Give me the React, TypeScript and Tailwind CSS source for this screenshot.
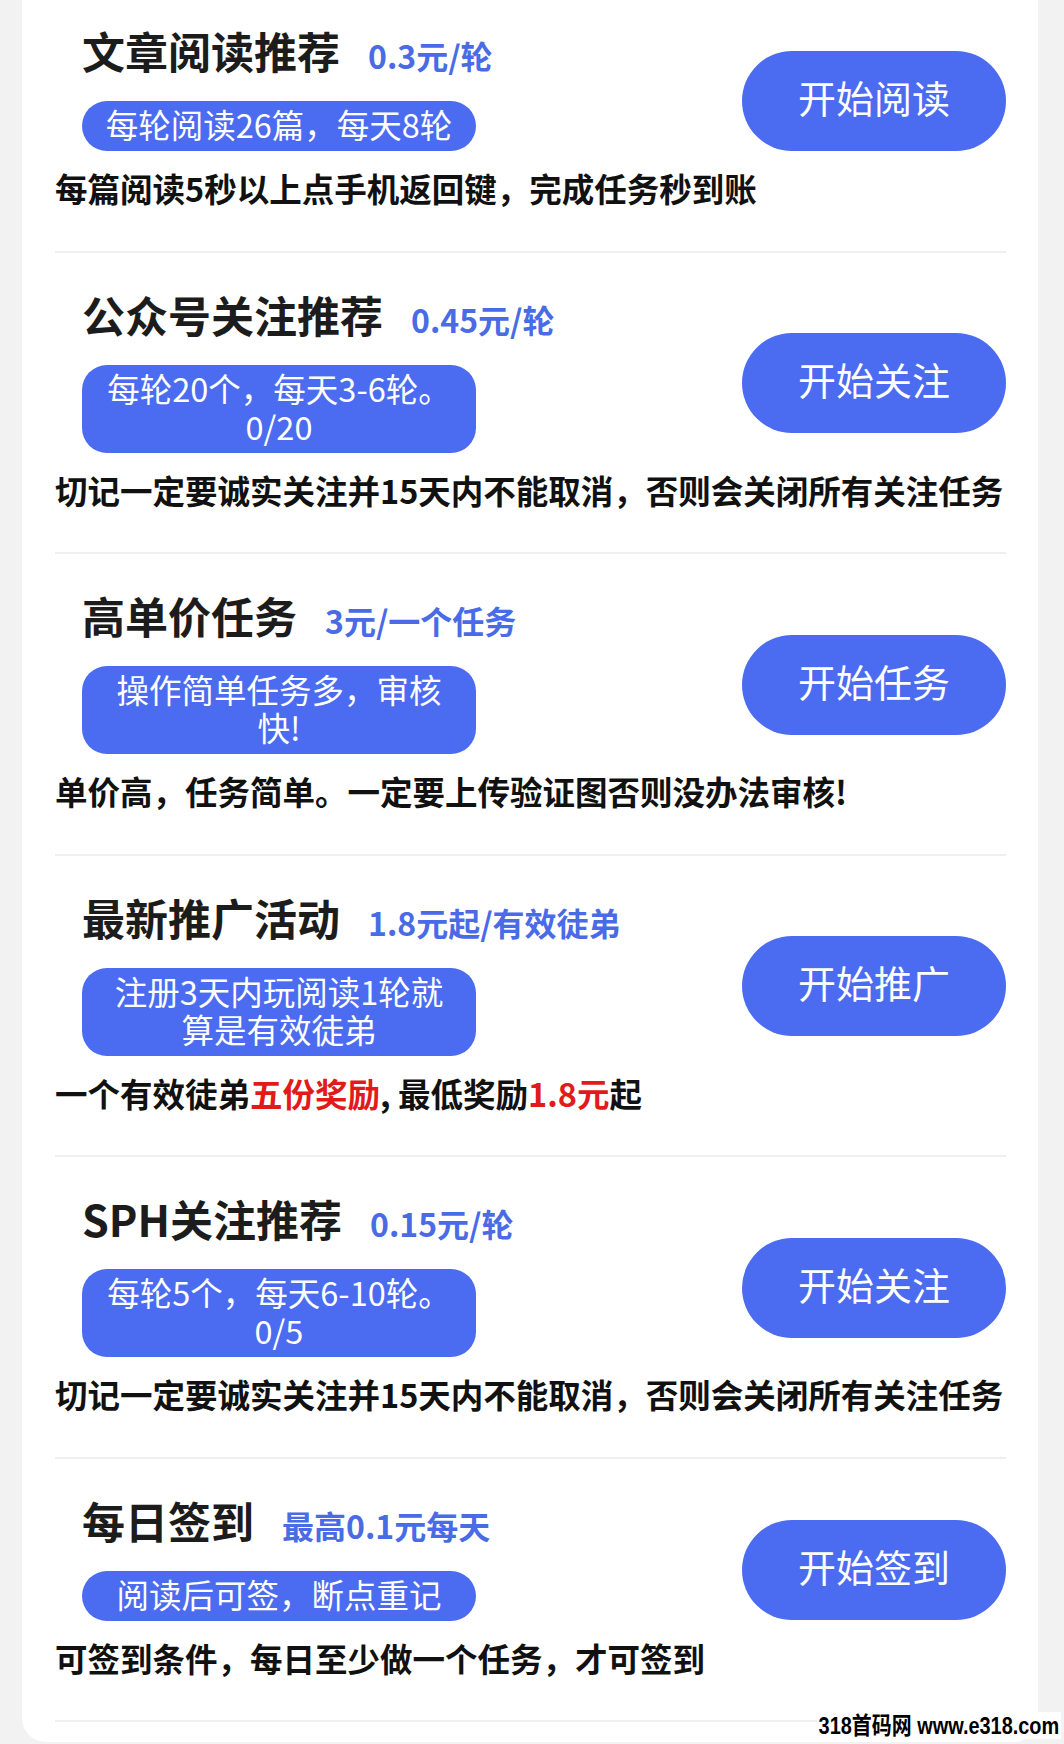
import React from "react";

type Task = {
  title: string;
  price: string;
  pill: string[];
  desc: React.ReactNode;
  button: string;
};

const tasks: Task[] = [
  {
    title: "文章阅读推荐",
    price: "0.3元/轮",
    pill: ["每轮阅读26篇，每天8轮"],
    desc: "每篇阅读5秒以上点手机返回键，完成任务秒到账",
    button: "开始阅读",
  },
  {
    title: "公众号关注推荐",
    price: "0.45元/轮",
    pill: ["每轮20个，每天3-6轮。", "0/20"],
    desc: "切记一定要诚实关注并15天内不能取消，否则会关闭所有关注任务",
    button: "开始关注",
  },
  {
    title: "高单价任务",
    price: "3元/一个任务",
    pill: ["操作简单任务多，审核", "快!"],
    desc: "单价高，任务简单。一定要上传验证图否则没办法审核!",
    button: "开始任务",
  },
  {
    title: "最新推广活动",
    price: "1.8元起/有效徒弟",
    pill: ["注册3天内玩阅读1轮就", "算是有效徒弟"],
    desc: (
      <>
        一个有效徒弟<span className="text-[#e21a1a]">五份奖励</span>, 最低奖励
        <span className="text-[#e21a1a]">1.8元</span>起
      </>
    ),
    button: "开始推广",
  },
  {
    title: "SPH关注推荐",
    price: "0.15元/轮",
    pill: ["每轮5个，每天6-10轮。", "0/5"],
    desc: "切记一定要诚实关注并15天内不能取消，否则会关闭所有关注任务",
    button: "开始关注",
  },
  {
    title: "每日签到",
    price: "最高0.1元每天",
    pill: ["阅读后可签，断点重记"],
    desc: "可签到条件，每日至少做一个任务，才可签到",
    button: "开始签到",
  },
];

function TaskRow({ task, first }: { task: Task; first: boolean }) {
  return (
    <div className={first ? "pt-[29px]" : "pt-[40px]"}>
      <div className="flex items-center justify-between">
        <div className="ml-[27px] flex flex-col">
          <div className="flex items-baseline">
            <span className="whitespace-nowrap text-[43px] font-bold leading-none text-[#1c1c1c]">
              {task.title}
            </span>
            <span className="ml-[28px] whitespace-nowrap text-[32px] font-bold leading-none text-[#4a6be6]">
              {task.price}
            </span>
          </div>
          <div className="mt-[29px] w-[394px] rounded-[25px] bg-[#4b6cf0] pb-[8px] pt-[4px] text-center text-[32.5px] leading-[38px] text-white">
            {task.pill.map((l, i) => (
              <div key={i} className="whitespace-nowrap">
                {l}
              </div>
            ))}
          </div>
        </div>
        <button className="mt-[21px] flex h-[100px] w-[264px] items-center justify-center rounded-full bg-[#4b6cf0] pb-[8px] text-[38px] leading-none text-white">
          {task.button}
        </button>
      </div>
      <div className="mt-[21px] whitespace-nowrap text-[32.5px] font-bold leading-none text-[#111111]">
        {task.desc}
      </div>
      <div className="mt-[46px] h-[2px] bg-[#efefef]" />
    </div>
  );
}

export default function App() {
  return (
    <div className="relative h-[1744px] w-full overflow-hidden bg-[#f2f2f2] font-['Noto_Sans_CJK_SC','Noto_Sans',sans-serif]">
      <div className="ml-[22px] w-[1016px] rounded-b-[24px] bg-white pb-[20px] pl-[33px] pr-[32px]">
        {tasks.map((t, i) => (
          <TaskRow key={i} task={t} first={i === 0} />
        ))}
      </div>
      <div className="absolute bottom-[5px] right-[3px] origin-right scale-x-[0.83] bg-white px-[2px] font-['Liberation_Sans','Noto_Sans_CJK_SC',sans-serif] text-[24px] font-bold leading-[27px] text-black">
        318首码网 www.e318.com
      </div>
    </div>
  );
}
